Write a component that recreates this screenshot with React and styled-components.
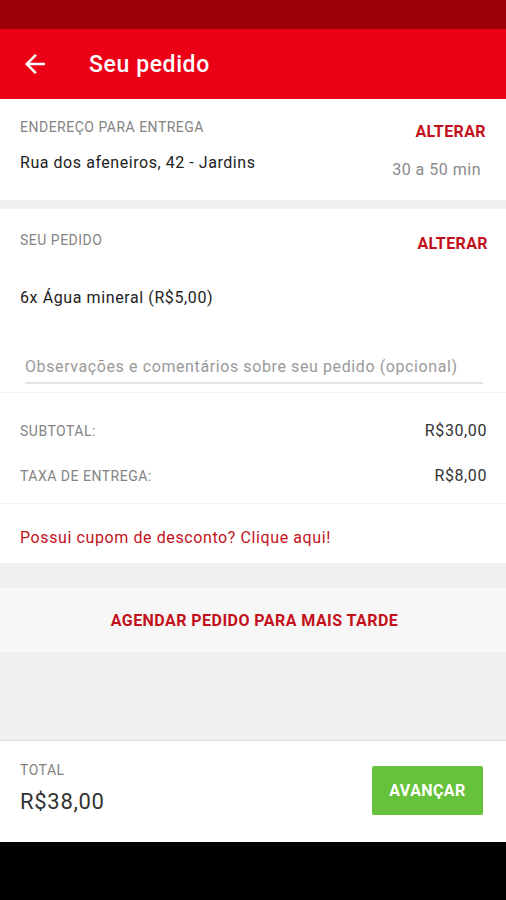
import React from 'react';
import styled, { createGlobalStyle } from 'styled-components';

const Global = createGlobalStyle`
  html, body { margin: 0; padding: 0; }
  body { font-family: Roboto, "Liberation Sans", sans-serif; background: #000; }
  * { box-sizing: border-box; }
`;

const Page = styled.div`
  width: 506px; height: 900px;
  display: flex; flex-direction: column;
  background: #f0f0f0;
`;
const StatusBar = styled.div`
  height: 29px; background: #9c0009; flex-shrink: 0;
`;
const AppBar = styled.header`
  height: 70px; background: #ec0016; flex-shrink: 0;
  display: flex; align-items: center;
  padding-left: 20px; gap: 39px;
  color: #fff;
`;
const Title = styled.h1`
  margin: 0; font-size: 23px; font-weight: 500;
  letter-spacing: 0.6px;
`;
const Content = styled.main`
  flex: 1; display: flex; flex-direction: column;
`;
const Card = styled.section`
  background: #fff;
  border-top: ${p => (p.$line ? '1px solid #f2f2f2' : 'none')};
  margin-bottom: ${p => p.$gap || 0}px;
`;
const HeadRow = styled.div`
  display: flex; justify-content: space-between;
  padding: 0 ${p => p.$right || 20}px 0 20px;
  height: ${p => p.$h}px;
`;
const Col = styled.div`
  display: flex; flex-direction: column;
  align-items: ${p => (p.$end ? 'flex-end' : 'flex-start')};
  padding-top: ${p => p.$top}px;
  gap: ${p => p.$gap}px;
`;
const Label = styled.span`
  font-size: 14px; line-height: 20px; color: #838383;
  letter-spacing: 0.5px;
  text-transform: uppercase;
`;
const Action = styled.span`
  font-size: 16px; line-height: 20px; font-weight: 700;
  color: #c3111c; letter-spacing: 0.4px;
`;
const Body = styled.span`
  font-size: 16px; line-height: 20px; color: #222;
  letter-spacing: 0.55px;
`;
const Muted = styled.span`
  font-size: 16px; line-height: 20px; color: #8a8a8a;
  letter-spacing: 0.5px;
  margin-right: ${p => p.$mr || 0}px;
`;
const Item = styled.div`
  padding: 0 20px; margin-top: 34px;
  font-size: 16px; line-height: 20px; color: #222;
  letter-spacing: 0.6px;
`;
const NoteInput = styled.input`
  display: block;
  margin: 48px 23px 0 25px;
  width: calc(100% - 48px);
  border: none; border-bottom: 2px solid #e3e3e3;
  padding: 0 0 6px 0; height: 28px;
  font: inherit; font-size: 16px; letter-spacing: 0.6px; color: #222;
  background: transparent; outline: none;
  &::placeholder { color: #9a9a9a; }
`;
const Spacer = styled.div`
  height: ${p => p.$h}px;
`;
const Totals = styled.div`
  padding: 15px 19px 5px 20px;
`;
const TotalRow = styled.div`
  height: 45px; display: flex; align-items: center;
  justify-content: space-between;
`;
const Value = styled.span`
  font-size: 16px; color: #333; letter-spacing: 0.6px;
`;
const Coupon = styled.div`
  padding: 24px 20px 15px;
  font-size: 16px; line-height: 20px; color: #c3111c;
  letter-spacing: 0.6px;
`;
const Schedule = styled.button`
  height: 64px; width: 100%; border: none;
  background: #f7f7f7; flex-shrink: 0;
  font: inherit; font-size: 16px; font-weight: 700;
  color: #c3111c; letter-spacing: 0.45px;
  padding: 0; padding-left: 3px;
`;
const Fill = styled.div`
  flex: 1;
`;
const BottomBar = styled.footer`
  height: 102px; flex-shrink: 0;
  background: #fff; border-top: 1px solid #dcdcdc;
  display: flex; align-items: center; justify-content: space-between;
  padding: 0 23px 0 20px;
`;
const TotalBox = styled.div`
  display: flex; flex-direction: column; gap: 10px;
  margin-top: -10px;
`;
const Amount = styled.span`
  font-size: 22px; line-height: 24px; color: #333;
  letter-spacing: 0.7px;
`;
const Advance = styled.button`
  width: 111px; height: 49px; border: none; border-radius: 2px;
  background: #66c23a; color: #fff;
  font: inherit; font-size: 16px; font-weight: 700; letter-spacing: 0.4px;
  margin-top: -2px;
`;
const NavBar = styled.div`
  height: 58px; background: #000; flex-shrink: 0;
`;

const BackIcon = () => (
  <svg width="30" height="30" viewBox="0 0 24 24" fill="#fff">
    <path d="M20 11H7.83l5.59-5.59L12 4l-8 8 8 8 1.41-1.41L7.83 13H20v-2z" />
  </svg>
);

const App = () => {
  return (
    <Page>
      <Global />
      <StatusBar />
      <AppBar>
        <BackIcon />
        <Title>Seu pedido</Title>
      </AppBar>
      <Content>
        <Card $gap={9}>
          <HeadRow $h={101}>
            <Col $top={18} $gap={16}>
              <Label>Endereço para entrega</Label>
              <Body>Rua dos afeneiros, 42 - Jardins</Body>
            </Col>
            <Col $end $top={23} $gap={18}>
              <Action>ALTERAR</Action>
              <Muted $mr={5}>30 a 50 min</Muted>
            </Col>
          </HeadRow>
        </Card>
        <Card>
          <HeadRow $h={45} $right={18}>
            <Col $top={21}>
              <Label>Seu pedido</Label>
            </Col>
            <Col $end $top={25}>
              <Action>ALTERAR</Action>
            </Col>
          </HeadRow>
          <Item>6x Água mineral (R$5,00)</Item>
          <NoteInput placeholder="Observações e comentários sobre seu pedido (opcional)" />
          <Spacer $h={8} />
        </Card>
        <Card $line>
          <Totals>
            <TotalRow>
              <Label>Subtotal:</Label>
              <Value>R$30,00</Value>
            </TotalRow>
            <TotalRow>
              <Label>Taxa de entrega:</Label>
              <Value>R$8,00</Value>
            </TotalRow>
          </Totals>
        </Card>
        <Card $line $gap={25}>
          <Coupon>Possui cupom de desconto? Clique aqui!</Coupon>
        </Card>
        <Schedule>AGENDAR PEDIDO PARA MAIS TARDE</Schedule>
        <Fill />
      </Content>
      <BottomBar>
        <TotalBox>
          <Label>Total</Label>
          <Amount>R$38,00</Amount>
        </TotalBox>
        <Advance>AVANÇAR</Advance>
      </BottomBar>
      <NavBar />
    </Page>
  );
};

export default App;
